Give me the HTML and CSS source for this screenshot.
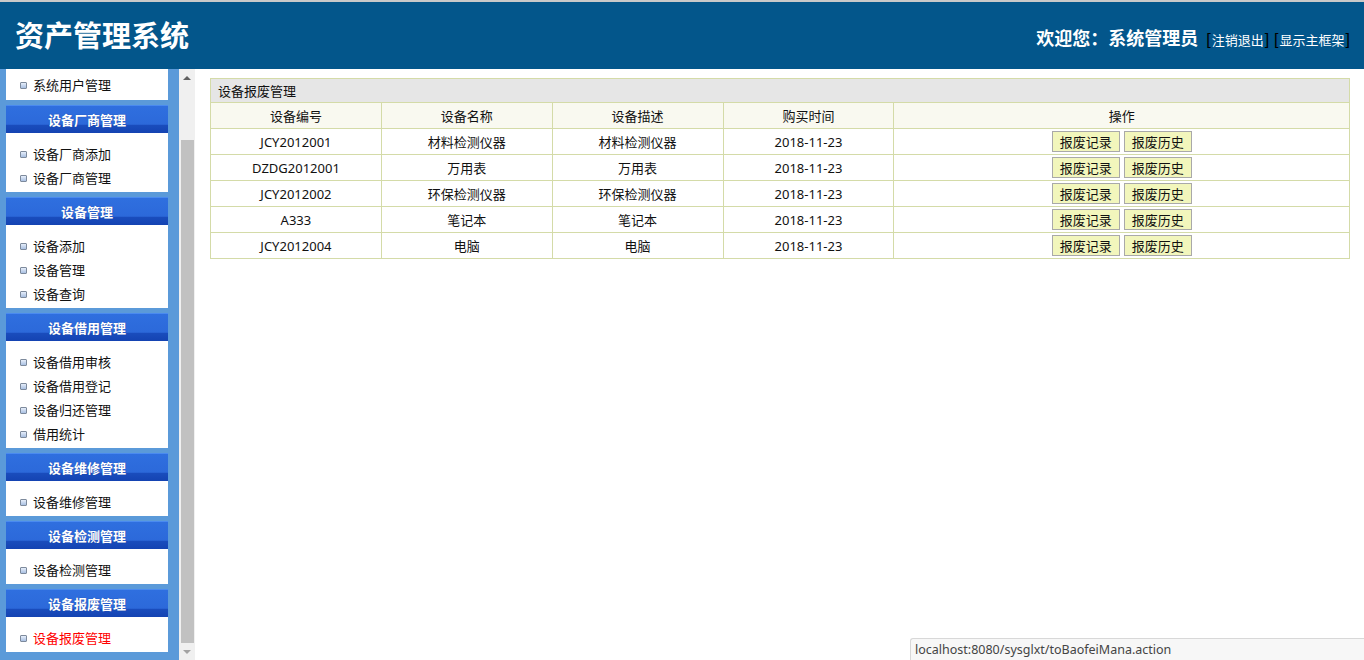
FILE: index.html
```html
<!DOCTYPE html>
<html lang="zh-CN">
<head>
<meta charset="UTF-8" />
<title>资产管理系统</title>
<link rel="stylesheet" href="styles.css">
</head>
<body>
  <div class="top">
    <h1 class="logo">资产管理系统</h1>
    <div class="welcome">
      <b>欢迎您：系统管理员</b>
      <span class="br">[</span><a href="#">注销退出</a><span class="br">]</span>
      <span class="br">[</span><a href="#">显示主框架</a><span class="br">]</span>
    </div>
  </div>

  <div class="wrap">
    <div class="side">
      <div class="menu">
        <ul class="panel first">
          <li><i></i>系统用户管理</li>
        </ul>

        <div class="menu-title">设备厂商管理</div>
        <ul class="panel">
          <li><i></i>设备厂商添加</li>
          <li><i></i>设备厂商管理</li>
        </ul>

        <div class="menu-title">设备管理</div>
        <ul class="panel">
          <li><i></i>设备添加</li>
          <li><i></i>设备管理</li>
          <li><i></i>设备查询</li>
        </ul>

        <div class="menu-title">设备借用管理</div>
        <ul class="panel">
          <li><i></i>设备借用审核</li>
          <li><i></i>设备借用登记</li>
          <li><i></i>设备归还管理</li>
          <li><i></i>借用统计</li>
        </ul>

        <div class="menu-title">设备维修管理</div>
        <ul class="panel">
          <li><i></i>设备维修管理</li>
        </ul>

        <div class="menu-title">设备检测管理</div>
        <ul class="panel">
          <li><i></i>设备检测管理</li>
        </ul>

        <div class="menu-title">设备报废管理</div>
        <ul class="panel">
          <li class="on"><i></i>设备报废管理</li>
        </ul>
      </div>
      <div class="scroll">
        <div class="arrow up"></div>
        <div class="track"><div class="thumb"></div></div>
        <div class="arrow down"></div>
      </div>
    </div>

    <div class="main">
      <table class="list">
        <colgroup>
          <col class="c15"><col class="c15"><col class="c15"><col class="c15"><col class="c40">
        </colgroup>
        <tr>
          <td class="caption" colspan="5">设备报废管理</td>
        </tr>
        <tr class="head">
          <td>设备编号</td>
          <td>设备名称</td>
          <td>设备描述</td>
          <td>购买时间</td>
          <td>操作</td>
        </tr>
        <tr>
          <td>JCY2012001</td>
          <td>材料检测仪器</td>
          <td>材料检测仪器</td>
          <td>2018-11-23</td>
          <td><div class="btns"><button>报废记录</button><button>报废历史</button></div></td>
        </tr>
        <tr>
          <td>DZDG2012001</td>
          <td>万用表</td>
          <td>万用表</td>
          <td>2018-11-23</td>
          <td><div class="btns"><button>报废记录</button><button>报废历史</button></div></td>
        </tr>
        <tr>
          <td>JCY2012002</td>
          <td>环保检测仪器</td>
          <td>环保检测仪器</td>
          <td>2018-11-23</td>
          <td><div class="btns"><button>报废记录</button><button>报废历史</button></div></td>
        </tr>
        <tr>
          <td>A333</td>
          <td>笔记本</td>
          <td>笔记本</td>
          <td>2018-11-23</td>
          <td><div class="btns"><button>报废记录</button><button>报废历史</button></div></td>
        </tr>
        <tr>
          <td>JCY2012004</td>
          <td>电脑</td>
          <td>电脑</td>
          <td>2018-11-23</td>
          <td><div class="btns"><button>报废记录</button><button>报废历史</button></div></td>
        </tr>
      </table>
    </div>
  </div>

  <div class="status">localhost:8080/sysglxt/toBaofeiMana.action</div>
</body>
</html>
```

FILE: styles.css
```css
* {
  box-sizing: border-box;
}

html, body {
  margin: 0;
  height: 100%;
  overflow: hidden;
}

body {
  font-family: "Noto Sans", "Noto Sans CJK SC", sans-serif;
  font-size: 13px;
  color: #111;
  background: #fff;
  display: flex;
  flex-direction: column;
}

/* header */
.top {
  height: 69px;
  border-top: 2px solid #c9c9c9;
  background: #03568b;
  display: flex;
  align-items: center;
  justify-content: space-between;
  padding: 0 13px 0 15px;
  flex-shrink: 0;
}

.logo {
  margin: 0;
  color: #fff;
  font-family: "Noto Sans CJK SC", sans-serif;
  font-size: 29px;
  font-weight: 700;
  line-height: 1;
  padding-bottom: 2px;
}

.welcome {
  color: #fff;
  font-family: "Noto Sans CJK SC", sans-serif;
  font-size: 13px;
  padding-top: 2px;
}

.welcome b {
  font-size: 18px;
  margin-right: 4px;
}

.welcome a {
  color: #fff;
  text-decoration: none;
}

.welcome .br {
  color: #000;
  font-family: "Liberation Sans", sans-serif;
  font-size: 16px;
  margin: 0 1px;
}

/* body */
.wrap {
  flex: 1;
  display: flex;
  min-height: 0;
}

.side {
  width: 195px;
  display: flex;
  flex-shrink: 0;
}

.menu {
  width: 179px;
  background: #5b9ad9;
  padding: 0 11px 0 6px;
  overflow: hidden;
}

.panel {
  list-style: none;
  margin: 0 0 5px;
  padding: 9px 0 2px 14px;
  background: #fff;
  font-family: "Noto Sans CJK SC", sans-serif;
}

.panel.first {
  padding-top: 4px;
  padding-bottom: 3px;
}

.panel li {
  height: 24px;
  line-height: 24px;
  display: flex;
  align-items: center;
  color: #111;
}

.panel li.on {
  color: #f00;
}

.panel li i {
  width: 7px;
  height: 7px;
  border: 1px solid #7d8a9c;
  border-radius: 1px;
  background: linear-gradient(#e6eefa, #a9c0e2);
  margin-right: 6px;
}

.menu-title {
  height: 28px;
  line-height: 27px;
  text-align: center;
  color: #fff;
  font-family: "Noto Sans CJK SC", sans-serif;
  font-weight: 700;
  border-top: 1px solid #4a8af0;
  background: linear-gradient(#2f6fdf 0, #2c69da 68%, #1a4dbd 70%, #1443b2 100%);
  text-shadow: 0 0 1px #1a3f99;
}

.scroll {
  width: 16px;
  background: #f0f0f0;
  display: flex;
  flex-direction: column;
}

.arrow {
  height: 17px;
  display: flex;
  align-items: center;
  justify-content: center;
}

.arrow.up::before,
.arrow.down::before {
  content: "";
  border-left: 4px solid transparent;
  border-right: 4px solid transparent;
}

.arrow.up::before {
  border-bottom: 4px solid #606060;
}

.arrow.down::before {
  border-top: 4px solid #a3a3a3;
}

.track {
  flex: 1;
  padding: 54px 1px 0 2px;
}

.thumb {
  height: 100%;
  background: #c1c1c1;
}

/* content */
.main {
  flex: 1;
  padding: 9px 14px 0 15px;
}

.list {
  width: 100%;
  border-collapse: collapse;
  table-layout: fixed;
  font-family: "Noto Sans", "Noto Sans CJK SC", sans-serif;
}

.list col.c15 {
  width: 15%;
}

.list col.c40 {
  width: 40%;
}

.list td {
  border: 1px solid #d4dba8;
  height: 26px;
  padding: 0;
  text-align: center;
}

.list td.caption {
  height: 24px;
  text-align: left;
  padding-left: 7px;
  background: #e6e6e6;
  font-family: "Noto Sans CJK SC", sans-serif;
}

.list .head td {
  background: #f9f9f0;
}

.btns {
  display: flex;
  justify-content: center;
  gap: 4px;
}

.btns button {
  height: 21px;
  padding: 0 7px;
  border: 1px solid #a9a9a9;
  background: #f2f6bc;
  font-family: "Noto Sans CJK SC", sans-serif;
  font-size: 13px;
  line-height: 19px;
  color: #111;
  border-radius: 0;
}

/* browser status bubble */
.status {
  position: fixed;
  right: 0;
  bottom: 0;
  width: 454px;
  height: 22px;
  line-height: 21px;
  padding-left: 4px;
  background: #f7f7f7;
  border: 1px solid #d8d8d8;
  border-right: 0;
  border-bottom: 0;
  border-top-left-radius: 3px;
  color: #444;
  font-family: "Noto Sans", sans-serif;
  font-size: 12.5px;
}
```
